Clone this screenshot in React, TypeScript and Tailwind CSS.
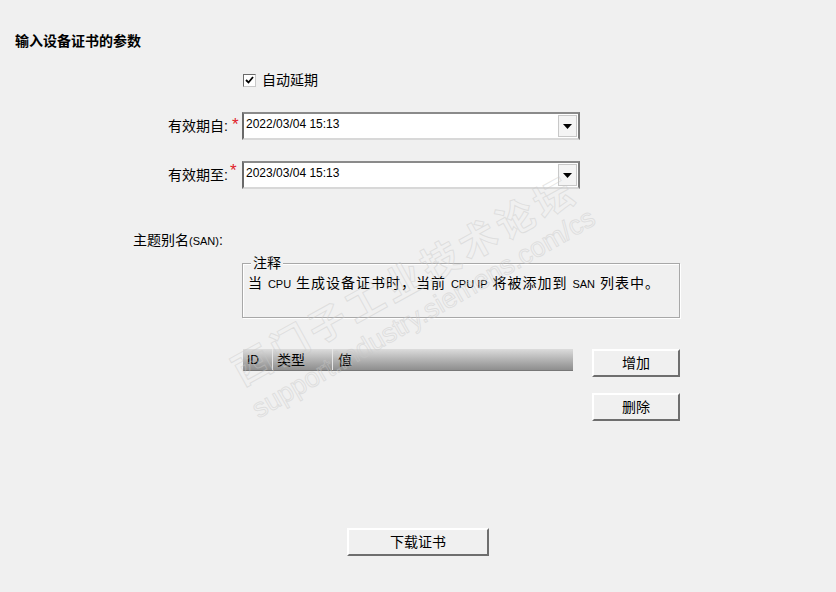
const FONT = { fontFamily: '"Liberation Sans", "Noto Sans CJK SC", sans-serif' };

function ComboBox({ value }: { value: string }) {
  return (
    <div className="flex h-[28px] w-[338px] border-2 border-t-[#8a8a8a] border-l-[#6a6a6a] border-r-[#7a7a7a] border-b-[#d8d8d8] bg-white">
      <div className="flex-1 pl-[2px] pt-[3px] text-[12px] leading-[14px] text-black">{value}</div>
      <div className="my-[1px] mr-[1px] flex w-[19px] items-center justify-center border border-[#c8c8c8] bg-[#f4f4f4]">
        <svg width="9" height="5" viewBox="0 0 9 5">
          <path d="M0 0 H9 L4.5 5 Z" fill="#000" />
        </svg>
      </div>
    </div>
  );
}

function Button({ label, width }: { label: string; width: string }) {
  return (
    <button
      className={`${width} h-[28px] border-2 border-t-[#ffffff] border-l-[#ffffff] border-r-[#6e6e6e] border-b-[#6e6e6e] bg-[#f0f0f0] text-[14px] leading-[16px] text-black`}
    >
      {label}
    </button>
  );
}

function Watermark() {
  return (
    <div className="pointer-events-none absolute left-0 top-0 h-full w-full">
      <div
        className="absolute left-[236px] top-[356px] origin-left -rotate-[29deg] whitespace-nowrap text-[38px] font-bold leading-[38px] tracking-[5px] text-transparent"
        style={{ WebkitTextStroke: '1px rgba(200,200,200,0.45)' }}
      >
        西门子工业技术论坛
      </div>
      <div
        className="absolute left-[254px] top-[398px] origin-left -rotate-[30deg] whitespace-nowrap text-[27px] leading-[26px] text-transparent"
        style={{ WebkitTextStroke: '1px rgba(200,200,200,0.45)' }}
      >
        support.industry.siemens.com/cs
      </div>
    </div>
  );
}

export default function App() {
  return (
    <div className="relative h-[592px] w-[836px] overflow-hidden bg-[#f0f0f0] text-black" style={FONT}>
      <div className="flex flex-col">
        {/* Title */}
        <div className="ml-[15px] mt-[33px] text-[14px] font-bold leading-[16px]">输入设备证书的参数</div>

        {/* Auto extend */}
        <div className="ml-[243px] mt-[23px] flex h-[16px] items-center gap-[6px]">
          <div className="flex h-[13px] w-[13px] items-center justify-center border border-t-[#6a6a6a] border-l-[#6a6a6a] border-r-[#c8c8c8] border-b-[#c8c8c8] bg-white">
            <svg width="9" height="8" viewBox="0 0 9 8">
              <path d="M1 4 L3.5 6.5 L8 1" stroke="#000" strokeWidth="1.8" fill="none" />
            </svg>
          </div>
          <span className="text-[14px] leading-[16px]">自动延期</span>
        </div>

        {/* Valid from */}
        <div className="mt-[24px] flex items-start">
          <div className="w-[228px] pt-[6px] text-right text-[14px] leading-[16px]">有效期自:</div>
          <div className="w-[14px] pl-[4px] pt-[6px] text-[17px] leading-[14px] text-[#e0202a]">*</div>
          <ComboBox value="2022/03/04 15:13" />
        </div>

        {/* Valid to */}
        <div className="mt-[21px] flex items-start">
          <div className="w-[228px] pt-[6px] text-right text-[14px] leading-[16px]">有效期至:</div>
          <div className="w-[14px] pl-[2px] pt-[3px] text-[17px] leading-[14px] text-[#e0202a]">*</div>
          <ComboBox value="2023/03/04 15:13" />
        </div>

        {/* SAN */}
        <div className="ml-[133px] mt-[43px] text-[14px] leading-[16px]">
          主题别名<span className="text-[11px]">(SAN)</span>:
        </div>

        {/* Note group box */}
        <div className="relative ml-[242px] mt-[14px] h-[55px] w-[438px] border border-[#a8a8a8] shadow-[inset_1px_1px_0_#ffffff,1px_1px_0_#ffffff]">
          <div className="absolute left-[8px] top-[-9px] bg-[#f0f0f0] px-[2px] text-[14px] leading-[16px]">注释</div>
          <div className="pl-[5px] pt-[11px] text-[14px] leading-[16px] tracking-[1px]">
            当 <span className="text-[11px] tracking-normal">CPU</span> 生成设备证书时，当前{' '}
            <span className="text-[11px] tracking-normal">CPU IP</span> 将被添加到{' '}
            <span className="text-[11px] tracking-normal">SAN</span> 列表中。
          </div>
        </div>

        {/* SAN list + add/delete */}
        <div className="ml-[243px] mt-[31px] flex items-start">
          <div className="flex h-[22px] w-[330px] items-center border-b border-[#777] bg-gradient-to-b from-[#dcdcdc] via-[#b4b4b4] to-[#8e8e8e] text-[14px] leading-[16px]">
            <div className="h-full w-[30px] border-r border-[#e6e6e6] pl-[4px] pt-[3px] text-[12px]">ID</div>
            <div className="h-full w-[60px] border-r border-[#e6e6e6] pl-[4px] pt-[3px]">类型</div>
            <div className="h-full flex-1 pl-[5px] pt-[3px]">值</div>
          </div>
          <div className="ml-[19px] flex flex-col gap-[16px]">
            <Button label="增加" width="w-[88px]" />
            <Button label="删除" width="w-[88px]" />
          </div>
        </div>

        {/* Download */}
        <div className="ml-[347px] mt-[107px]">
          <Button label="下载证书" width="w-[142px]" />
        </div>
      </div>
      <Watermark />
    </div>
  );
}
